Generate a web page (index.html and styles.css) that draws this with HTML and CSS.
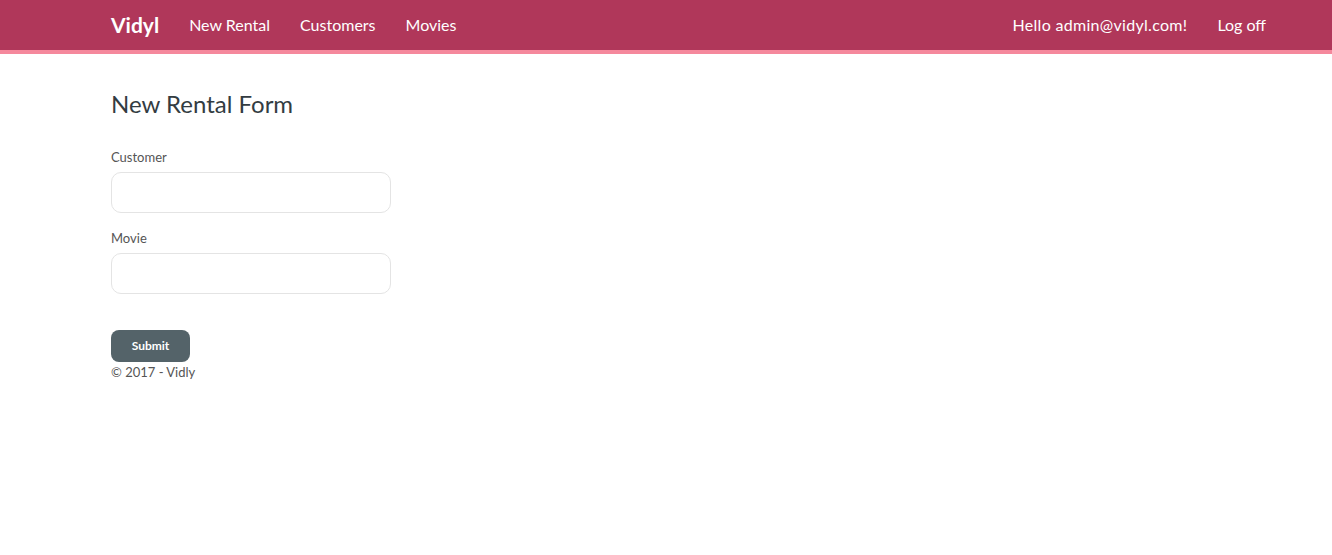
FILE: index.html
```html
<!DOCTYPE html>
<html lang="en">
<head>
<meta charset="utf-8">
<title>New Rental Form - Vidly</title>
<link rel="stylesheet" href="styles.css">
</head>
<body>
<header class="navbar">
  <div class="navbar-inner">
    <nav class="nav-left">
      <a class="brand" href="#">Vidyl</a>
      <a class="nav-link" href="#">New Rental</a>
      <a class="nav-link" href="#">Customers</a>
      <a class="nav-link" href="#">Movies</a>
    </nav>
    <nav class="nav-right">
      <a class="nav-link" href="#">Hello admin@vidyl.com!</a>
      <a class="nav-link" href="#">Log off</a>
    </nav>
  </div>
</header>
<main class="container">
  <h2 class="page-title">New Rental Form</h2>
  <form class="rental-form">
    <div class="form-group">
      <label class="form-label" for="customer">Customer</label>
      <input class="form-control" id="customer" type="text">
    </div>
    <div class="form-group">
      <label class="form-label" for="movie">Movie</label>
      <input class="form-control" id="movie" type="text">
    </div>
    <button class="btn-submit" type="button">Submit</button>
  </form>
  <footer class="footer">© 2017 - Vidly</footer>
</main>
</body>
</html>
```
FILE: styles.css
```css
* { box-sizing: border-box; }
html, body { margin: 0; padding: 0; }
body {
  font-family: "Source Sans Pro", Lato, "Liberation Sans", sans-serif;
  font-size: 14px;
  color: #555;
  background: #fff;
}
.navbar {
  background: #b0375a;
  border-bottom: 4px solid #f5889c;
  height: 54px;
}
.navbar-inner {
  display: flex;
  justify-content: space-between;
  align-items: center;
  height: 50px;
  padding: 0 66px 2px 111px;
}
.nav-left, .nav-right {
  display: flex;
  align-items: center;
  gap: 30px;
}
.brand {
  color: #fff;
  font-weight: 700;
  font-size: 21px;
  text-decoration: none;
}
.nav-link {
  color: #fff;
  font-size: 16px;
  text-decoration: none;
}
.nav-right .nav-link:first-child {
  letter-spacing: 0.3px;
}
.container {
  padding: 0 111px;
}
.page-title {
  margin: 36px 0 29px;
  font-size: 24px;
  font-weight: 400;
  color: #333c42;
  line-height: 1.2;
}
.form-group {
  display: flex;
  flex-direction: column;
  margin-bottom: 16px;
}
.form-label {
  font-size: 13px;
  color: #555;
  margin-bottom: 6px;
  line-height: 18px;
}
.form-control {
  width: 280px;
  height: 41px;
  border: 1px solid #e4e4e4;
  border-radius: 10px;
  background: #fff;
  font: inherit;
}
.btn-submit {
  margin-top: 36px;
  width: 79px;
  height: 32px;
  border: none;
  border-radius: 8px;
  background: #546369;
  color: #fff;
  font-family: inherit;
  font-weight: 700;
  font-size: 12px;
  display: block;
}
.footer {
  margin-top: 2px;
  font-size: 13px;
  color: #555;
}
```
